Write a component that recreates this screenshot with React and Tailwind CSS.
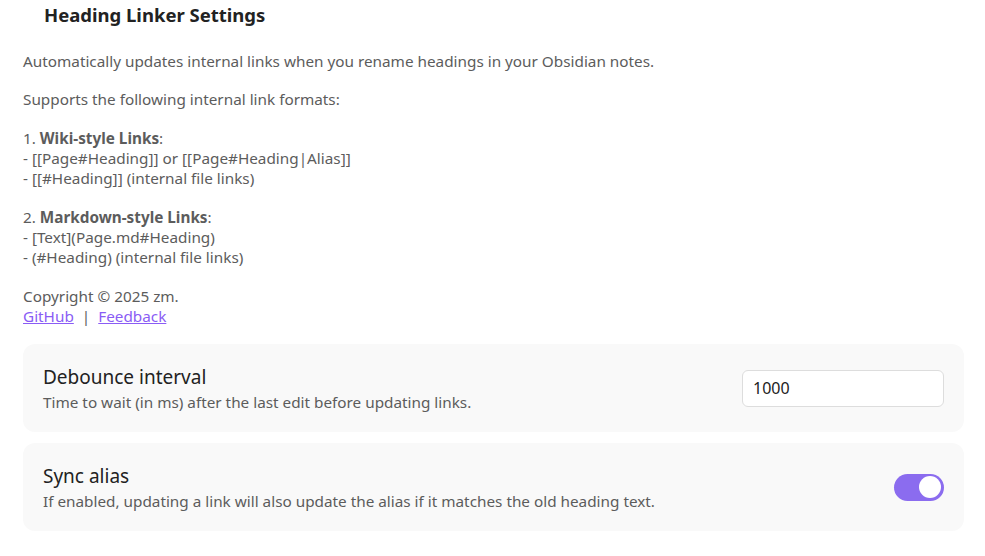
export default function App() {
  const font = { fontFamily: '"Noto Sans", "Open Sans", sans-serif' };
  return (
    <div className="w-[985px] h-[556px] bg-white overflow-hidden" style={font}>
      <div className="pl-[23px] pr-[21px]">
        <h3 className="pl-[21px] pt-[3px] text-[18.5px] leading-[24px] font-bold text-[#222222]">Heading Linker Settings</h3>
        <div className="mt-[24px] text-[15.3px] leading-[20px] text-[#5c5c5c]">
          <p>Automatically updates internal links when you rename headings in your Obsidian notes.</p>
          <p className="mt-[18px]">Supports the following internal link formats:</p>
          <p className="mt-[19px]">1. <b>Wiki-style Links</b>:<br />- [[Page#Heading]] or [[Page#Heading|Alias]]<br />- [[#Heading]] (internal file links)</p>
          <p className="mt-[19px]">2. <b>Markdown-style Links</b>:<br />- [Text](Page.md#Heading)<br />- (#Heading) (internal file links)</p>
          <p className="mt-[19px]">Copyright © 2025 zm.<br />
            <a className="text-[#8a5cf5] underline">GitHub</a>
            <span className="mx-[8px]">|</span>
            <a className="text-[#8a5cf5] underline">Feedback</a>
          </p>
        </div>
        <div className="mt-[18px] flex flex-col gap-[11px]">
          <div className="h-[88px] rounded-[12px] bg-[#f9f9f9] px-[20px] flex items-center justify-between">
            <div>
              <div className="text-[19px] leading-[24px] text-[#222222]">Debounce interval</div>
              <div className="mt-[3px] text-[15.3px] leading-[20px] text-[#5c5c5c]">Time to wait (in ms) after the last edit before updating links.</div>
            </div>
            <div className="w-[202px] h-[37px] rounded-[6px] border border-[#dddddd] bg-white flex items-center px-[10px] text-[16px] text-[#222222]">1000</div>
          </div>
          <div className="h-[88px] rounded-[12px] bg-[#f9f9f9] px-[20px] flex items-center justify-between">
            <div>
              <div className="text-[19px] leading-[24px] text-[#222222]">Sync alias</div>
              <div className="mt-[3px] text-[15.3px] leading-[20px] text-[#5c5c5c]">If enabled, updating a link will also update the alias if it matches the old heading text.</div>
            </div>
            <div className="w-[50px] h-[27px] rounded-full bg-[#8b6cef] flex items-center justify-end pr-[3px]">
              <div className="w-[22px] h-[22px] rounded-full bg-white"></div>
            </div>
          </div>
        </div>
      </div>
    </div>
  );
}
